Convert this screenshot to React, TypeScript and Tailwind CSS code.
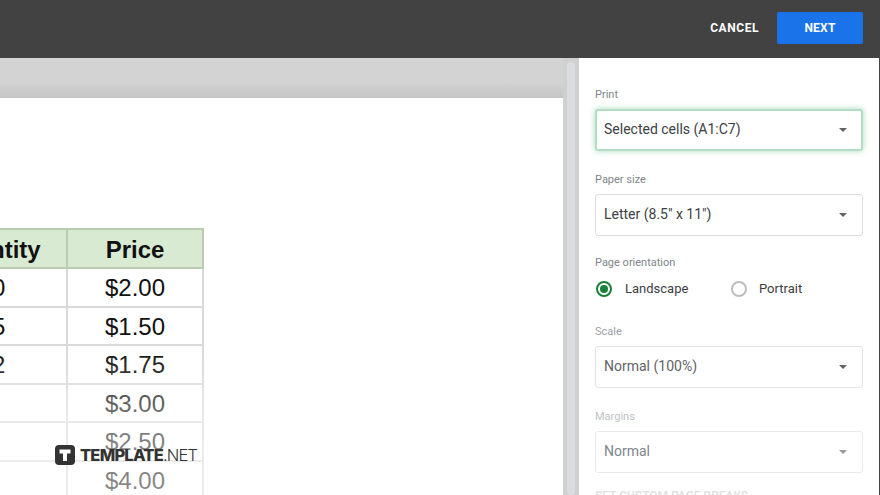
const rows = [
  ['10', '$2.00'],
  ['15', '$1.50'],
  ['12', '$1.75'],
  ['', '$3.00'],
  ['', '$2.50'],
  ['', '$4.00'],
];

function Arrow({ faded }: { faded?: boolean }) {
  return (
    <svg width="8" height="4" viewBox="0 0 8 4" className="shrink-0">
      <path d="M0 0h8L4 4z" fill={faded ? '#9a9a9a' : '#5f6368'} />
    </svg>
  );
}

function Field({
  label,
  value,
  labelClass = 'text-[#80868b]',
  valueClass = 'text-[#3c4043]',
  boxClass = 'border border-[#dadce0] pl-2 pr-[15px]',
  faded,
}: {
  label: string;
  value: string;
  labelClass?: string;
  valueClass?: string;
  boxClass?: string;
  faded?: boolean;
}) {
  return (
    <div>
      <div className={`h-4 text-[11px] leading-4 mb-[6px] ${labelClass}`}>{label}</div>
      <div className={`h-[42px] w-[268px] rounded-[3px] bg-white flex items-center justify-between ${boxClass}`}>
        <span className={`text-[14px] -mt-[2px] ${valueClass}`}>{value}</span>
        <Arrow faded={faded} />
      </div>
    </div>
  );
}

export default function App() {
  return (
    <div className="w-[880px] h-[495px] overflow-hidden flex flex-col relative font-['Roboto',sans-serif]">
      <div className="h-[58px] shrink-0 bg-[#424242] flex items-center justify-end gap-[18px] pr-[17px] pb-[3px]">
        <button className="text-white text-[12px] font-bold tracking-[0.55px]">CANCEL</button>
        <button className="w-[86px] h-8 bg-[#1a73e8] rounded-[2px] text-white text-[12px] font-bold tracking-[0.2px]">NEXT</button>
      </div>

      <div className="flex flex-1 min-h-0">
        <div className="w-[579px] shrink-0 flex bg-[#d0d0d0]">
          <div className="w-[563px] shrink-0 flex flex-col">
            <div className="h-10 shrink-0 bg-gradient-to-b from-[#d3d3d3] from-60% to-[#c5c5c5]" />
            <div className="bg-white flex-1 min-h-0 overflow-hidden pt-[130px] font-['Liberation_Sans',sans-serif] text-[24px] text-[#111]">
              <div className="-ml-[82px] w-[286px] border-t-2 border-[#b9cbb2]">
                <div className="grid grid-cols-[150px_136px] h-[39px] bg-[#d9ead3] border-b-2 border-[#b9cbb2] font-bold">
                  <div className="text-center leading-[39px] border-r-2 border-[#b9cbb2]">Quantity</div>
                  <div className="text-center leading-[39px] border-r-2 border-[#b9cbb2]">Price</div>
                </div>
                {rows.map((r) => (
                  <div key={r[1]} className="grid grid-cols-[150px_136px] h-[38.5px] border-b-2 border-[#d9d9d9]">
                    <div className="text-center leading-[37px] border-r-2 border-[#d9d9d9]">{r[0]}</div>
                    <div className="text-center leading-[37px] border-r-2 border-[#d9d9d9]">{r[1]}</div>
                  </div>
                ))}
              </div>
            </div>
          </div>
          <div className="flex-1 pl-1 pr-[4px] pt-1">
            <div className="h-full rounded-full bg-[#dadce0]" />
          </div>
        </div>

        <div className="flex-1 bg-white border-r border-[#444] pl-4 pt-[29px] flex flex-col">
          <Field
            label="Print"
            value="Selected cells (A1:C7)"
            boxClass="border-2 border-[#b5dcc5] shadow-[0_0_6px_#a8dcbc] pl-[7px] pr-[14px]"
          />
          <div className="mt-[21px]">
            <Field label="Paper size" value={'Letter (8.5" x 11")'} />
          </div>
          <div className="mt-[19px] h-4 text-[11px] leading-4 text-[#80868b]">Page orientation</div>
          <div className="mt-[10px] h-4 flex items-center pl-[1px] text-[13px] text-[#3c4043]">
            <div className="w-4 h-4 rounded-full border-2 border-[#188038] flex items-center justify-center shrink-0">
              <div className="w-2 h-2 rounded-full bg-[#188038]" />
            </div>
            <span className="ml-[13px] w-[106px]">Landscape</span>
            <div className="w-4 h-4 rounded-full border-2 border-[#bdbdbd] shrink-0" />
            <span className="ml-3">Portrait</span>
          </div>
          <div className="mt-[27px]">
            <Field label="Scale" value="Normal (100%)" labelClass="text-[#9aa0a6]" valueClass="text-[#5f6368]" boxClass="border border-[#e4e4e4] pl-2 pr-[15px]" />
          </div>
          <div className="mt-[21px]">
            <Field
              label="Margins"
              value="Normal"
              labelClass="text-[#bdc1c6]"
              valueClass="text-[#80868b]"
              boxClass="border border-[#ebebeb] pl-2 pr-[15px]"
              faded
            />
          </div>
          <div className="mt-[15px] text-[12px] font-medium leading-4 text-[#e0e0e0] whitespace-nowrap">SET CUSTOM PAGE BREAKS</div>
        </div>
      </div>

      {/* fade over the lower rows */}
      <div className="absolute left-0 top-[350px] w-[563px] h-[145px] bg-gradient-to-b from-white/0 via-white/45 to-white/50" />

      {/* watermark */}
      <div className="absolute left-[55px] top-[445px] flex items-center">
        <svg width="20" height="20" viewBox="0 0 20 20">
          <rect width="20" height="20" rx="4" fill="#333333" />
          <path d="M4.5 4.5h11v4h-3.500v7.500h-4V8.500h-3.500z" fill="#ffffff" />
        </svg>
        <span className="ml-[5px] text-[16.5px] leading-5 text-[#333] font-['Inter',sans-serif] tracking-[-0.8px]">
          <span className="font-extrabold">TEMPLATE</span>
          <span className="font-light">.NET</span>
        </span>
      </div>
    </div>
  );
}
